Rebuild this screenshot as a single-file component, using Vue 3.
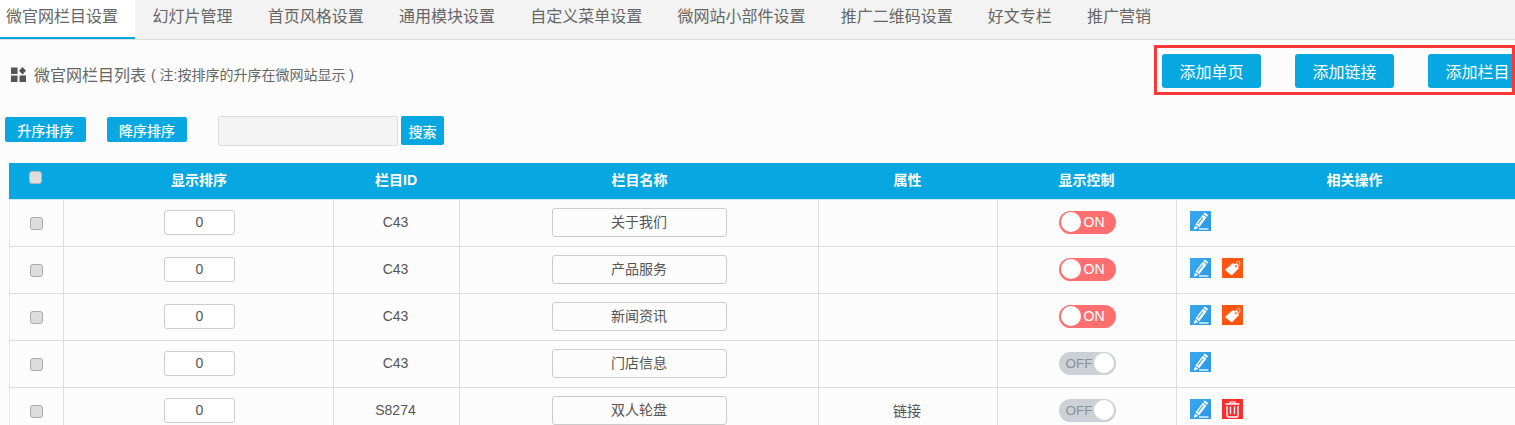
<script setup>
const tabs = ['微官网栏目设置','幻灯片管理','首页风格设置','通用模块设置','自定义菜单设置','微网站小部件设置','推广二维码设置','好文专栏','推广营销']
const rows = [
  { id: 'C43', name: '关于我们', attr: '', on: true, extra: '' },
  { id: 'C43', name: '产品服务', attr: '', on: true, extra: 'tag' },
  { id: 'C43', name: '新闻资讯', attr: '', on: true, extra: 'tag' },
  { id: 'C43', name: '门店信息', attr: '', on: false, extra: '' },
  { id: 'S8274', name: '双人轮盘', attr: '链接', on: false, extra: 'del' },
]
</script>

<template>
  <div class="page">
    <nav class="tabs">
      <a v-for="(t, i) in tabs" :key="t" class="tab" :class="{ active: i === 0 }">{{ t }}</a>
    </nav>

    <header class="head">
      <div class="title">
        <svg class="grid" width="15" height="15" viewBox="0 0 15 15">
          <rect x="0" y="0.5" width="6.5" height="6.5" fill="#555" />
          <path d="M11.5 0l3.5 3.7-3.5 3.7-3.5-3.7z" fill="#555" />
          <rect x="0" y="8.5" width="6.5" height="6.5" fill="#555" />
          <rect x="8.5" y="8.5" width="6.5" height="6.5" fill="#555" />
        </svg>
        <span class="title-main">微官网栏目列表</span>
        <span class="title-note">( 注:按排序的升序在微网站显示 )</span>
      </div>
      <div class="actions">
        <button class="add">添加单页</button>
        <button class="add">添加链接</button>
        <button class="add">添加栏目</button>
      </div>
    </header>

    <div class="toolbar">
      <button class="sort">升序排序</button>
      <button class="sort second">降序排序</button>
      <input class="search" />
      <button class="go">搜索</button>
    </div>

    <div class="table-wrap">
      <table>
        <colgroup>
          <col style="width:55px" /><col style="width:270px" /><col style="width:126px" />
          <col style="width:359px" /><col style="width:179px" /><col style="width:179px" /><col />
        </colgroup>
        <thead>
          <tr>
            <th><span class="check head-check"></span></th>
            <th>显示排序</th><th class="nudge">栏目ID</th><th>栏目名称</th><th class="nudge">属性</th><th class="nudge">显示控制</th><th>相关操作</th>
          </tr>
        </thead>
        <tbody>
          <tr v-for="r in rows" :key="r.name">
            <td><span class="check"></span></td>
            <td><input class="num" value="0" /></td>
            <td class="nudge">{{ r.id }}</td>
            <td><span class="name">{{ r.name }}</span></td>
            <td class="nudge">{{ r.attr }}</td>
            <td>
              <span class="toggle" :class="r.on ? 'on' : 'off'">
                <i class="knob"></i><span class="label">{{ r.on ? 'ON' : 'OFF' }}</span>
              </span>
            </td>
            <td class="ops">
              <span class="op edit">
                <svg width="21" height="20" viewBox="0 0 21 20">
                  <path d="M14.6 1.4l3.6 2.7-1.2 1.6-3.6-2.7z" fill="#fff" />
                  <path d="M12.8 3.8l3.7 2.8-7.4 9.6-3.7-2.8z" fill="#fff" />
                  <path d="M12.4 6.4l.9.7-5 6.5-.9-.7z" fill="#2f9fe8" />
                  <path d="M5 14.4l3.3 2.5-4.6 1.8z" fill="#fff" />
                  <rect x="9" y="17.2" width="9.5" height="1.6" fill="#d6edfc" />
                </svg>
              </span>
              <span v-if="r.extra === 'tag'" class="op tag">
                <svg width="21" height="20" viewBox="0 0 21 20">
                  <path d="M3 12l7.4-6.6 5.6.6.6 4.6-6.8 7z" fill="#fff" />
                  <circle cx="13.8" cy="8.2" r="1.1" fill="#ff5511" />
                  <path d="M13.8 8.2c.6-2 1.4-5 2.8-5s2 2.4.2 5.2" fill="none" stroke="#ffd9c8" stroke-width="1" />
                </svg>
              </span>
              <span v-else-if="r.extra === 'del'" class="op del">
                <svg width="21" height="20" viewBox="0 0 21 20" fill="none" stroke="#fff">
                  <path d="M3.5 5h14" stroke-width="1.5" />
                  <path d="M8 4.5V3h5v1.5" stroke-width="1.2" />
                  <path d="M5 7v9.5a1.5 1.5 0 0 0 1.5 1.5h8a1.5 1.5 0 0 0 1.5-1.5V7" stroke-width="1.4" />
                  <path d="M8.5 7.5v7.5M12.5 7.5v7.5" stroke-width="1.3" />
                </svg>
              </span>
            </td>
          </tr>
        </tbody>
      </table>
    </div>
  </div>
</template>

<style>
html, body { margin: 0; overflow: hidden; background: #fcfcfc; }
</style>

<style scoped>
.page {
  width: 1515px;
  height: 425px;
  overflow: hidden;
  background: #fcfcfc;
  font-family: "Liberation Sans", "Noto Sans CJK SC", sans-serif;
  color: #555;
}
.tabs {
  display: flex;
  height: 40px;
  box-sizing: border-box;
  background: #f3f3f3;
  border-bottom: 1px solid #ddd;
}
.tab {
  height: 39px;
  box-sizing: border-box;
  padding: 0 17.6px;
  font-size: 16px;
  line-height: 34px;
  color: #666;
}
.tab.active {
  padding: 0 17px 0 6px;
  background: #fff;
  border-bottom: 2px solid #07a7e1;
  height: 39px;
}
.head {
  display: flex;
  justify-content: space-between;
  margin-top: 5px;
}
.title {
  display: flex;
  align-items: center;
  padding-left: 11px;
  margin-top: 8px;
  height: 42px;
  color: #666;
}
.grid { margin-right: 8px; }
.title-main { font-size: 16px; }
.title-note { font-size: 14px; margin-left: 5px; }
.actions {
  display: flex;
  gap: 34px;
  width: 361px;
  height: 50px;
  box-sizing: border-box;
  padding: 6px 0 0 5px;
  border: 3px solid #fb3737;
  overflow: hidden;
}
.add {
  flex: none;
  width: 99px;
  height: 34px;
  padding: 0;
  border: 0;
  border-radius: 3px;
  background: #07a7e1;
  color: #fff;
  font: 16px "Liberation Sans", "Noto Sans CJK SC", sans-serif;
}
.toolbar {
  display: flex;
  align-items: flex-start;
  margin-top: 21px;
  padding-left: 5px;
}
.sort {
  width: 81px;
  height: 25px;
  margin-top: 1px;
  padding: 0;
  border: 0;
  border-radius: 2px;
  background: #07a7e1;
  color: #fff;
  font: 14px "Liberation Sans", "Noto Sans CJK SC", sans-serif;
  -webkit-text-stroke: 0.2px #fff;
}
.second { width: 80px; margin-left: 21px; }
.search {
  width: 180px;
  height: 30px;
  box-sizing: border-box;
  margin-left: 31px;
  border: 1px solid #ddd;
  border-radius: 2px;
  background: #f3f3f3;
}
.go {
  width: 43px;
  height: 29px;
  margin-left: 3px;
  padding: 0;
  border: 0;
  border-radius: 2px;
  background: #07a7e1;
  color: #fff;
  font: 14px "Liberation Sans", "Noto Sans CJK SC", sans-serif;
  -webkit-text-stroke: 0.2px #fff;
}
.table-wrap {
  margin: 17px 0 0 9px;
  width: 1506px;
  overflow: hidden;
}
table {
  width: 1523px;
  table-layout: fixed;
  border-collapse: separate;
  border-spacing: 0;
  font-size: 14px;
}
th {
  height: 37px;
  box-sizing: border-box;
  padding: 0 0 4px;
  background: #07a7e1;
  border-bottom: 1px solid #cde9f4;
  color: #fff;
  font-weight: 700;
  font-size: 14px;
  text-align: center;
}
td {
  height: 47px;
  box-sizing: border-box;
  padding: 0 0 2px;
  text-align: center;
  color: #555;
  border-right: 1px solid #ddd;
  border-bottom: 1px solid #ddd;
}
td:first-child { border-left: 1px solid #e6e6e6; }
th.nudge, td.nudge { padding-right: 2px; }
.check {
  display: inline-block;
  width: 13px;
  height: 13px;
  box-sizing: border-box;
  border: 1px solid #aaa;
  border-radius: 3px;
  background: #ddd;
  vertical-align: middle;
}
.head-check { position: relative; top: -3px; left: -1px; border-color: #b5b5b5; background: #ddd; }
.num {
  width: 71px;
  height: 25px;
  box-sizing: border-box;
  margin-left: 2px;
  padding: 0;
  border: 1px solid #ccc;
  border-radius: 3px;
  background: #fff;
  color: #555;
  text-align: center;
  font: 14px "Liberation Sans", sans-serif;
  vertical-align: middle;
}
.name {
  display: inline-block;
  width: 175px;
  height: 29px;
  box-sizing: border-box;
  border: 1px solid #ccc;
  border-radius: 3px;
  line-height: 27px;
  vertical-align: middle;
}
.toggle {
  display: inline-flex;
  align-items: center;
  width: 57px;
  height: 23px;
  box-sizing: border-box;
  padding: 0 2px;
  border-radius: 12px;
  font-size: 14px;
  vertical-align: middle;
}
.toggle.on { background: #ff6f6f; color: #fff; }
.toggle.off { background: #ccd1d7; color: #8a8f99; flex-direction: row-reverse; }
.knob {
  width: 20px;
  height: 20px;
  border-radius: 50%;
  background: #fff;
}
.on .label { margin-left: 3px; }
.off .label { margin-right: 1px; font-size: 13.5px; }
.ops { padding-left: 13px; text-align: left; border-right: 0; }
.op {
  display: inline-block;
  width: 21px;
  height: 20px;
  margin-right: 11px;
  position: relative;
  top: -1px;
  vertical-align: middle;
}
.op svg { display: block; }
.edit { background: linear-gradient(135deg, #3aa9ee, #2b97e4); }
.tag { background: #ff5511; }
.del { background: #fb2d2d; }
</style>
